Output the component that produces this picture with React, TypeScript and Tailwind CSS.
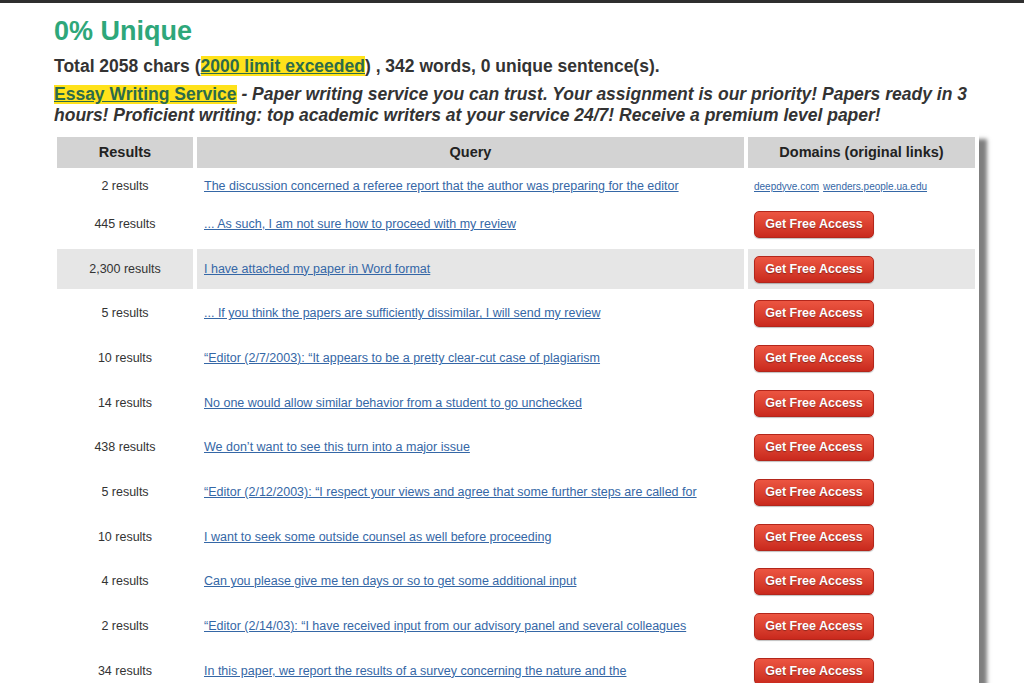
type Row = {
  count: string;
  query: string;
  domains?: string[];
  shaded?: boolean;
};

const rows: Row[] = [
  {
    count: "2 results",
    query:
      "The discussion concerned a referee report that the author was preparing for the editor",
    domains: ["deepdyve.com", "wenders.people.ua.edu"],
  },
  { count: "445 results", query: "... As such, I am not sure how to proceed with my review" },
  { count: "2,300 results", query: "I have attached my paper in Word format", shaded: true },
  {
    count: "5 results",
    query: "... If you think the papers are sufficiently dissimilar, I will send my review",
  },
  {
    count: "10 results",
    query: "\u201cEditor (2/7/2003): \u201cIt appears to be a pretty clear-cut case of plagiarism",
  },
  { count: "14 results", query: "No one would allow similar behavior from a student to go unchecked" },
  { count: "438 results", query: "We don\u2019t want to see this turn into a major issue" },
  {
    count: "5 results",
    query:
      "\u201cEditor (2/12/2003): \u201cI respect your views and agree that some further steps are called for",
  },
  { count: "10 results", query: "I want to seek some outside counsel as well before proceeding" },
  { count: "4 results", query: "Can you please give me ten days or so to get some additional input" },
  {
    count: "2 results",
    query:
      "\u201cEditor (2/14/03): \u201cI have received input from our advisory panel and several colleagues",
  },
  {
    count: "34 results",
    query: "In this paper, we report the results of a survey concerning the nature and the",
  },
];

function AccessButton() {
  return (
    <button className="h-[27px] w-[120px] rounded-[5px] border border-[#b3261b] bg-gradient-to-b from-[#ec5541] to-[#c9291d] text-[12.5px] font-bold text-white shadow-[0_1px_1px_rgba(0,0,0,0.25)] [text-shadow:0_1px_1px_rgba(0,0,0,0.35)]">
      Get Free Access
    </button>
  );
}

export default function App() {
  return (
    <div className="min-h-[683px] bg-white font-['Liberation_Sans',Arial,sans-serif] text-[#333]">
      <div className="h-[3px] bg-[#2f2f2f]" />

      <div className="pl-[54px] pt-[13px]">
        {/* Uniqueness summary */}
        <h1 className="text-[27px] font-bold leading-[31px] text-[#2ea77a]">0% Unique</h1>
        <p className="mt-[9px] text-[17.5px] font-bold leading-[20px] text-[#333]">
          Total 2058 chars (
          <a href="#" className="bg-[#ffe21a] text-[#2d6b4a] underline">
            2000 limit exceeded
          </a>
          ) , 342 words, 0 unique sentence(s).
        </p>
        <p className="mt-[8px] w-[940px] text-[17.5px] font-bold italic leading-[21px] text-[#333]">
          <a
            href="#"
            className="inline-block bg-[#ffe21a] not-italic leading-[19px] text-[#2d6b4a] underline"
          >
            Essay Writing Service
          </a>{" "}
          - Paper writing service you can trust. Your assignment is our priority! Papers ready in 3
          hours! Proficient writing: top academic writers at your service 24/7! Receive a premium
          level paper!
        </p>
      </div>

      {/* Results table */}
      <div className="ml-[53px] mt-[7px] w-[926px] bg-white shadow-[8px_6px_4px_rgba(0,0,0,0.5)]">
        <table className="w-[926px] table-fixed border-separate border-spacing-[4px]">
          <colgroup>
            <col className="w-[136px]" />
            <col className="w-[547px]" />
            <col className="w-[227px]" />
          </colgroup>
          <thead>
            <tr className="h-[31px] text-[14.5px] font-bold text-[#222]">
              <th className="bg-[#d3d3d3]">Results</th>
              <th className="bg-[#d3d3d3]">Query</th>
              <th className="bg-[#d3d3d3]">Domains (original links)</th>
            </tr>
          </thead>
          <tbody className="text-[12.5px]">
            {rows.map((row, i) => (
              <tr key={i} className={row.domains ? "h-[28px]" : "h-[40.7px]"}>
                <td className={`text-center text-[#333] ${row.shaded ? "bg-[#e6e6e6]" : ""}`}>
                  {row.count}
                </td>
                <td className={`px-[7px] ${row.shaded ? "bg-[#e6e6e6]" : ""}`}>
                  <a href="#" className="whitespace-nowrap text-[#3567a6] underline">
                    {row.query}
                  </a>
                </td>
                <td className={`px-[6px] ${row.shaded ? "bg-[#e6e6e6]" : ""}`}>
                  {row.domains ? (
                    <span className="flex gap-[4px] text-[10px]">
                      {row.domains.map((d) => (
                        <a key={d} href="#" className="text-[#3567a6] underline">
                          {d}
                        </a>
                      ))}
                    </span>
                  ) : (
                    <AccessButton />
                  )}
                </td>
              </tr>
            ))}
          </tbody>
        </table>
      </div>
    </div>
  );
}
